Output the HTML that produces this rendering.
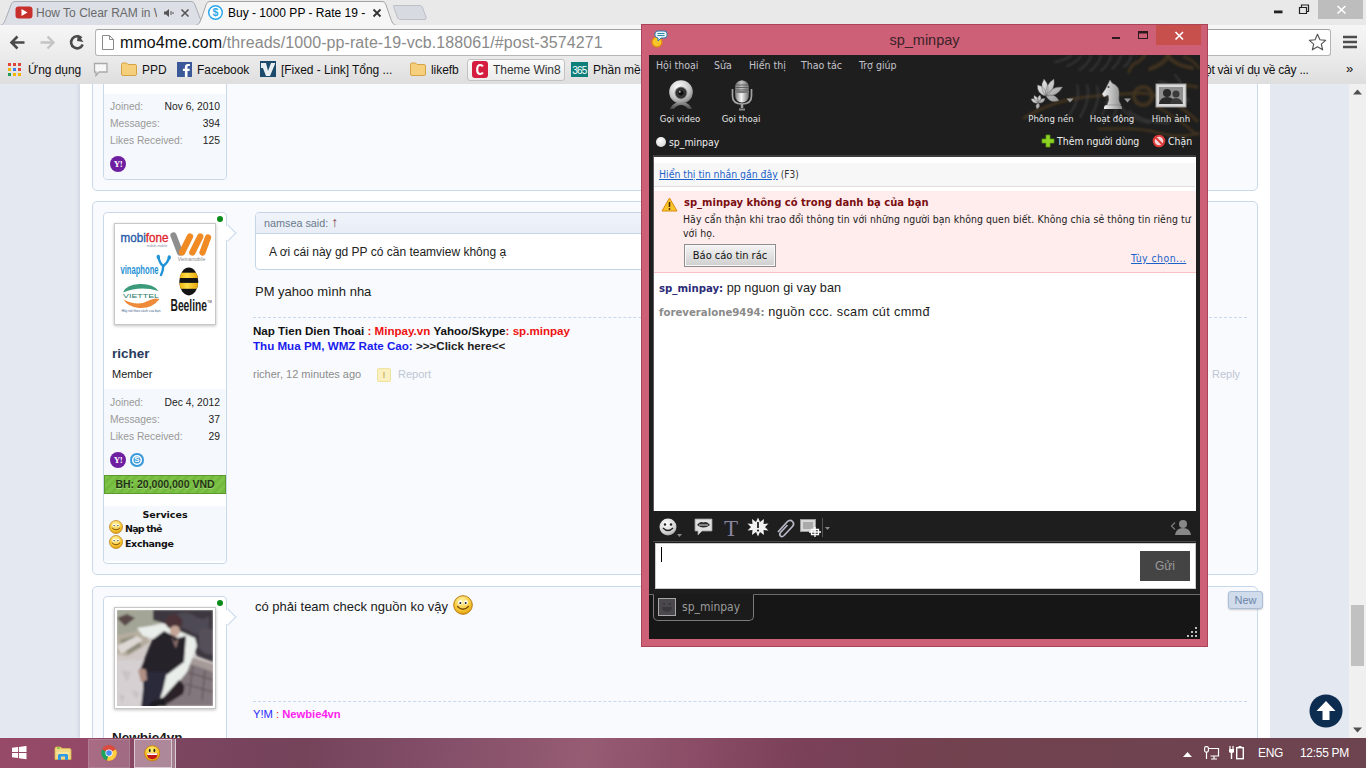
<!DOCTYPE html>
<html><head><meta charset="utf-8"><title>Buy - 1000 PP</title>
<style>
*{box-sizing:border-box;margin:0;padding:0}
html,body{width:1366px;height:768px;overflow:hidden;background:#fafbfd;font-family:"Liberation Sans",sans-serif;}
.abs{position:absolute}
#chrome{position:absolute;left:0;top:0;width:1366px;height:85px;background:#e9e9e9;font-family:"Liberation Sans",sans-serif;}
#toolbar{position:absolute;left:0;top:25px;width:1366px;height:60px;background:linear-gradient(#f6f6f6,#ececec 50%,#dedede);border-bottom:1px solid #a6a6a6}
#page{position:absolute;left:0;top:84px;width:1349px;height:654px;background:#e4e8f1;overflow:hidden}
#sheet{position:absolute;left:80px;top:0;width:1190px;height:654px;background:#fff;box-shadow:-2px 0 3px rgba(60,70,100,.10)}
#vscroll{position:absolute;left:1349px;top:84px;width:17px;height:654px;background:#f0f0f0}
#taskbar{position:absolute;left:0;top:738px;width:1366px;height:30px;background:linear-gradient(100deg,#964a68 0,#924866 7%,#7c4560 13%,#74435a 22%,#85506a 33%,#965c72 43%,#8a4c66 51%,#7a4058 59%,#72424f 70%,#6c4450 100%);color:#fff}
#ym{position:absolute;left:641px;top:24px;width:567px;height:623px;background:#cd5f77;box-shadow:0 0 0 1px rgba(150,50,70,.6) inset}
#ymc{position:absolute;left:8px;top:31px;width:551px;height:584px;background:#1e1e1e;overflow:hidden;font-family:"DejaVu Sans Condensed","DejaVu Sans",sans-serif}
.tabt{font-size:12px;line-height:16px;white-space:nowrap;overflow:hidden;letter-spacing:0}
.bmt{top:62px;font-size:12px;letter-spacing:-0.050px;line-height:16px;color:#111;white-space:nowrap}
.post{position:absolute;left:92px;width:1166px;border:1px solid #c9d9ec;border-radius:5px;background:#f9fafd}
.ubox{position:absolute;left:103px;width:124px;border:1px solid #c9d9ec;border-radius:4px;background:#fff;overflow:hidden}
.ustat{position:absolute;left:0;width:122px;background:#f5f8fc}
.st{position:absolute;left:110px;width:110px;font-size:10.300px;line-height:13px;margin-top:1px;color:#9a9a9a;white-space:nowrap}
.st b{position:absolute;right:0;top:0;font-weight:normal;color:#1d1d1d}
.yh{position:absolute;width:16px;height:16px;border-radius:8px;background:#6e1fa0;color:#fff;font:bold 9px/16px "Liberation Serif",serif;text-align:center;letter-spacing:-0.500px}
.sk{position:absolute;width:14px;height:14px;border-radius:7px;background:#3a9ad9;color:#fff;font:bold 8px/14px "Liberation Sans",sans-serif;text-align:center;box-shadow:inset 0 0 0 2px #3a9ad9, inset 0 0 0 3.500px #fff}
.bh{position:absolute;left:104px;width:122px;height:19px;border:1px solid #5c9a2e;background:repeating-linear-gradient(135deg,#7cc246 0 3px,#73b93d 3px 6px);color:#1f3510;font:bold 10.500px/17px "Liberation Sans",sans-serif;text-align:center;text-shadow:0 1px 0 rgba(255,255,255,.35)}
.svc{position:absolute;font:bold 9.500px/12px "DejaVu Sans",sans-serif;color:#111;white-space:nowrap}
.smi{position:absolute}
.arrow{position:absolute;left:226px;width:10px;height:16px}
.arrow:before{content:"";position:absolute;left:-4px;top:2px;width:11px;height:11px;border:1px solid #c9d9ec;border-left:none;border-bottom:none;background:#fff;transform:rotate(45deg)}
.dot{position:absolute;left:217px;width:6px;height:6px;border-radius:3px;background:#0a8a1a}
.av{position:absolute;left:114px;width:102px;height:102px;background:#fff;border:1px solid #c8c8c8;box-shadow:0 1px 3px rgba(0,0,0,.25)}
.photo{position:absolute;left:2px;top:2px;width:96px;height:96px}
.uname{position:absolute;left:112px;margin-top:1px;font:bold 13.500px/16px "Liberation Sans",sans-serif;color:#283a5c}
.utitle{position:absolute;left:112px;margin-top:1px;font:11px/13px "Liberation Sans",sans-serif;color:#222}
.quote{position:absolute;border:1px solid #c5d5e8;border-radius:4px;background:#fff;overflow:hidden}
.qh{height:21px;background:linear-gradient(#f0f4fa,#e8edf6);border-bottom:1px solid #c5d5e8;font:10.800px/21px "Liberation Sans",sans-serif;color:#6a7a8c;padding-left:8px}
.qb{font:12px/14px "Liberation Sans",sans-serif;color:#222;padding:11px 0 0 13px}
.msg{position:absolute;left:255px;margin-top:1px;font:13px/18px "Liberation Sans",sans-serif;color:#1a1a1a;white-space:nowrap}
.dash{position:absolute;left:253px;width:994px;height:0;border-top:1px dashed #c9d9ec}
.sig{position:absolute;left:253px;font:bold 11.600px/15px "Liberation Sans",sans-serif;white-space:nowrap}
.meta{position:absolute;font:11px/15px "Liberation Sans",sans-serif;color:#8c8c8c;white-space:nowrap}
.rep{position:absolute;width:14px;height:14px;border-radius:2px;background:#faf0c0;border:1px solid #efe2a0;color:#c9b36a;font:bold 9px/12px "Liberation Sans",sans-serif;text-align:center}
.newb{position:absolute;left:1228px;top:507px;width:35px;height:18px;border:1px solid #a9bdd8;border-radius:3px;background:#d0dcec;color:#6a84a8;font:11px/16px "Liberation Sans",sans-serif;text-align:center;box-shadow:0 1px 2px rgba(0,0,0,.2)}
.totop{position:absolute;left:1309px;top:610px;width:34px;height:34px}
.mn{position:absolute;top:3px;font:10.500px/14px "DejaVu Sans Condensed","DejaVu Sans",sans-serif;color:#c4c4cc;white-space:nowrap}
.tl{position:absolute;top:57px;text-align:center;font:9.500px/14px "DejaVu Sans Condensed","DejaVu Sans",sans-serif;color:#e6e6e6;white-space:nowrap}
.yt{font:10.400px/14px "DejaVu Sans Condensed","DejaVu Sans",sans-serif;white-space:nowrap}
.cm{left:5px;font:12.700px/16px "Liberation Sans",sans-serif;color:#1c1c1c;white-space:nowrap}
.yb{font:bold 11.300px/14px "DejaVu Sans Condensed","DejaVu Sans",sans-serif}
.tt{top:8px;font:12px/15px "Liberation Sans",sans-serif;color:#fff;white-space:nowrap;letter-spacing:-0.300px}
</style></head><body>
<div id="chrome">
<svg class="abs" style="left:0;top:0" width="1366" height="26" viewBox="0 0 1366 26">
  <path d="M-1 25.5 C3.500 25.5 4.500 22 6 18 L11 5 C12 2 13 1.5 16 1.5 L190 1.5 C193 1.5 194 2 195 5 L200 18 C201.5 22 202.5 25.5 207 25.5 Z" fill="#dcdfe6" stroke="#a9adb6" stroke-width="1"/>
  <path d="M394 5.5 L419 5.5 C421 5.5 422 6 422.700 8 L426 17 C426.500 19 426 19.500 424 19.500 L401 19.500 C399 19.500 398 19 397.300 17 L394 8 C393.500 6 393.500 5.500 394 5.500Z" fill="#d7dae1" stroke="#bcbfc6" stroke-width="1"/>
  <path d="M0 25.5 L194.500 25.500 C199 25.500 200 22 201.500 18 L206 5 C207 2 208 1.500 211 1.500 L381 1.500 C384 1.500 385 2 386 5 L390.500 18 C392 22 393 25.500 397.500 25.500 L1366 25.500 L1366 27 L0 27Z" fill="#f6f6f6" stroke="#a4a4a4" stroke-width="1"/>
</svg>
<div id="toolbar"></div>
<!-- tab 1 -->
<svg class="abs" style="left:15px;top:6px" width="18" height="14" viewBox="0 0 18 14"><rect x="0.500" y="0.500" width="17" height="12" rx="3" fill="#c8302d"/><path d="M6.500 3 L12.500 6.500 L6.500 10Z" fill="#fff"/></svg>
<div class="abs tabt" style="left:36px;top:5px;color:#6a6a6a;width:121px">How To Clear RAM in W</div>
<svg class="abs" style="left:163px;top:7px" width="12" height="12" viewBox="0 0 12 12"><path d="M1 4.500h2l3-2.500v8l-3-2.500h-2z" fill="#555"/><path d="M8 4v4M10 5v2" stroke="#555" stroke-width="1"/></svg>
<svg class="abs" style="left:180px;top:8px" width="10" height="10" viewBox="0 0 10 10"><path d="M1.500 1.500l7 7M8.500 1.500l-7 7" stroke="#555" stroke-width="1.600"/></svg>
<!-- tab 2 -->
<svg class="abs" style="left:207px;top:4px" width="17" height="17" viewBox="0 0 17 17"><circle cx="8.500" cy="8.500" r="6.800" fill="#fff" stroke="#29a7ec" stroke-width="1.500"/><text x="8.500" y="12.300" font-size="10.500" font-weight="bold" text-anchor="middle" fill="#29a7ec" font-family="Liberation Sans, sans-serif">$</text></svg>
<div class="abs tabt" style="left:228px;top:5px;color:#000;width:138px">Buy - 1000 PP - Rate 19 - V</div>
<svg class="abs" style="left:372px;top:8px" width="10" height="10" viewBox="0 0 10 10"><path d="M1.500 1.500l7 7M8.500 1.500l-7 7" stroke="#333" stroke-width="1.800"/></svg>
<!-- window buttons -->
<svg class="abs" style="left:1180px;top:0" width="186" height="22" viewBox="0 0 186 22"><rect x="138" y="0" width="45" height="19" fill="#bdbdbd"/><rect x="94" y="10.500" width="8.500" height="2.800" fill="#222"/><path d="M119.500 7.500h7v6h-7zM121.500 7.500v-2.500h7v6.500h-2" fill="none" stroke="#222" stroke-width="1.200"/><path d="M157.500 6l8 7.500M165.500 6l-8 7.500" stroke="#fff" stroke-width="1.600"/></svg>
<!-- nav -->
<svg class="abs" style="left:9px;top:33px" width="84" height="20" viewBox="0 0 84 20"><path d="M2.500 9.500h13M8.500 3.500l-6 6 6 6" fill="none" stroke="#4a4a4a" stroke-width="2.600"/><path d="M31.500 9.500h13M38.500 3.500l6 6-6 6" fill="none" stroke="#c4c4c4" stroke-width="2.400"/><path d="M72.500 5.200A6 6 0 1 0 73.700 11.500" fill="none" stroke="#4a4a4a" stroke-width="2.600"/><path d="M68.500 2v6.500h6.500z" fill="#4a4a4a" transform="rotate(8 72 5)"/></svg>
<div class="abs" style="left:95px;top:29px;width:1236px;height:27px;background:#fff;border:1px solid #b5b5b5;border-radius:3px;border-top-color:#a2a2a2"></div>
<svg class="abs" style="left:102px;top:35px" width="12" height="15" viewBox="0 0 12 15"><path d="M0.500 0.500h7l4 4v10h-11z" fill="#fff" stroke="#8a8a8a"/><path d="M7.500 0.500v4h4" fill="none" stroke="#8a8a8a"/></svg>
<div class="abs" id="url" style="left:120px;top:32px;font-size:16px;line-height:21px;color:#8a8a8a;white-space:nowrap;letter-spacing:0.085px"><span style="color:#111">mmo4me.com</span>/threads/1000-pp-rate-19-vcb.188061/#post-3574271</div>
<svg class="abs" style="left:1308px;top:33px" width="19" height="19" viewBox="0 0 21 21"><path d="M10.500 1.500l2.700 6 6.300 0.600-4.800 4.200 1.500 6.300-5.700-3.400-5.700 3.400 1.500-6.300-4.800-4.200 6.300-0.600z" fill="#fff" stroke="#555" stroke-width="1.300" stroke-linejoin="round"/></svg>
<svg class="abs" style="left:1343px;top:35px" width="14" height="14" viewBox="0 0 14 14"><path d="M0 2h14M0 7h14M0 12h14" stroke="#4d4d4d" stroke-width="2.600"/></svg>
<!-- bookmarks -->
<div id="bm">
<svg class="abs" style="left:8px;top:63px" width="14" height="14" viewBox="0 0 14 14"><g><rect x="0" y="0" width="3" height="3" fill="#e0453a"/><rect x="5" y="0" width="3" height="3" fill="#e0453a"/><rect x="10" y="0" width="3" height="3" fill="#e0453a"/><rect x="0" y="5" width="3" height="3" fill="#f4b400"/><rect x="5" y="5" width="3" height="3" fill="#3b7ded"/><rect x="10" y="5" width="3" height="3" fill="#e0453a"/><rect x="0" y="10" width="3" height="3" fill="#1c9c56"/><rect x="5" y="10" width="3" height="3" fill="#f4b400"/><rect x="10" y="10" width="3" height="3" fill="#f4b400"/></g></svg>
<div class="abs bmt" style="left:28px">Ứng dụng</div>
<svg class="abs" style="left:93px;top:62px" width="16" height="15" viewBox="0 0 16 15"><path d="M1.500 1.500h12.500v8.500h-8l-3 3.500v-3.500h-1.500z" fill="#f7f7f7" stroke="#a9a9a9" stroke-width="1.300"/></svg>
<svg class="abs fold" style="left:121px;top:62px" width="16" height="14" viewBox="0 0 16 14"><path d="M0.500 2.500 q0-1.500 1.500-1.500h3.500l1.500 1.500h7q1.500 0 1.500 1.500v8q0 1.500-1.500 1.500h-12q-1.500 0-1.500-1.500z" fill="#f6cf7c" stroke="#d6a343"/></svg>
<div class="abs bmt" style="left:142px">PPD</div>
<svg class="abs" style="left:177px;top:62px" width="15" height="15" viewBox="0 0 15 15"><rect width="15" height="15" fill="#3b5998"/><path d="M10.500 15v-6h2l0.300-2.300h-2.300v-1.500c0-0.700 0.300-1.100 1.100-1.100h1.300v-2.100c-0.300 0-1-0.100-1.900-0.100-1.900 0-3.100 1.100-3.100 3.200v1.600h-2v2.300h2v6z" fill="#fff"/></svg>
<div class="abs bmt" style="left:197px">Facebook</div>
<svg class="abs" style="left:260px;top:61px" width="16" height="16" viewBox="0 0 16 16"><rect width="16" height="16" fill="#1b4a6b"/><path d="M1 2h5l2 8 3-8h4v1l-5 12h-4z" fill="#e9eef2"/><path d="M1 2h5v5h-5z" fill="#e9eef2"/></svg>
<div class="abs bmt" style="left:281px">[Fixed - Link] Tổng ...</div>
<svg class="abs fold" style="left:410px;top:62px" width="16" height="14" viewBox="0 0 16 14"><path d="M0.500 2.500 q0-1.500 1.500-1.500h3.500l1.500 1.500h7q1.500 0 1.500 1.500v8q0 1.500-1.500 1.500h-12q-1.500 0-1.500-1.500z" fill="#f6cf7c" stroke="#d6a343"/></svg>
<div class="abs bmt" style="left:431px">likefb</div>
<div class="abs" style="left:467px;top:59px;width:98px;height:22px;border:1px solid #c2c2c2;border-radius:3px;background:linear-gradient(#fafafa,#ececec)"></div>
<svg class="abs" style="left:472px;top:61px" width="16" height="17" viewBox="0 0 16 17"><rect width="16" height="17" rx="3" fill="#d41d3f"/><path d="M10.800 5.500c-0.500-1-1.400-1.500-2.600-1.500-2 0-3 1.600-3 4.500s1 4.500 3 4.500c1.200 0 2.100-0.500 2.600-1.500" fill="none" stroke="#fff" stroke-width="2.200"/></svg>
<div class="abs bmt" style="left:493px;color:#333">Theme Win8</div>
<svg class="abs" style="left:571px;top:62px" width="17" height="15" viewBox="0 0 17 15"><rect width="17" height="15" fill="#0f7f7c"/><text x="8.500" y="11.500" font-size="10" fill="#fff" text-anchor="middle" font-family="Liberation Sans, sans-serif" letter-spacing="-0.8">365</text></svg>
<div class="abs bmt" style="left:593px">Phần mề</div>
<div class="abs bmt" style="left:1205px;letter-spacing:-0.250px">ột vài ví dụ về cây ...</div>
<div class="abs bmt" style="left:1346px;font-size:13px;top:61px">»</div>
</div>
</div>
<div id="page"><div id="sheet"></div>
<!-- post 1 (partial) -->
<div class="post" style="top:-20px;height:127px"></div>
<div class="ubox" style="top:-20px;height:116px"><div class="ustat" style="top:29px;height:86px"></div></div>
<div class="st" style="top:15px"><span>Joined:</span><b>Nov 6, 2010</b></div>
<div class="st" style="top:32px"><span>Messages:</span><b>394</b></div>
<div class="st" style="top:49px"><span>Likes Received:</span><b>125</b></div>
<div class="yh" style="left:110px;top:72px">Y!</div>
<!-- post 2 -->
<div class="post" style="top:117px;height:374px"></div>
<div class="ubox" style="top:128px;height:352px"><div class="ustat" style="top:176px;height:86px"></div><div class="ustat" style="top:293px;height:55px"></div></div>
<div class="arrow" style="top:141px"></div>
<div class="dot" style="top:132px"></div>
<div class="av" style="top:139px">
 <svg width="94" height="94" viewBox="0 0 94 94" style="position:absolute;left:3px;top:3px">
  <text x="2.500" y="15" font-size="13.500" fill="#2459a8" stroke="#2459a8" stroke-width=".35" font-family="Liberation Sans, sans-serif" textLength="48" lengthAdjust="spacingAndGlyphs">mobi<tspan fill="#e2242a" stroke="#e2242a">fone</tspan></text>
  <text x="39" y="19.500" font-size="3.300" fill="#8a8aa8" text-anchor="middle" font-family="Liberation Sans, sans-serif">mobile-mobile</text>
  <g fill="none" stroke-linecap="round" stroke-width="6.300" transform="translate(0 1.500)"><path d="M55.500 7 L62 24" stroke="#8e8e8e"/><path d="M64 24 L72 8M74.300 24 L82.300 8M84.500 24 L90 9" stroke="#f08a24"/></g>
  <text x="73.500" y="33.500" font-size="4.800" fill="#8a8a8a" text-anchor="middle" font-family="Liberation Sans, sans-serif">Vietnamobile</text>
  <text x="2.500" y="47.300" font-size="13" font-weight="bold" fill="#1f93d6" font-family="Liberation Sans, sans-serif" textLength="38" lengthAdjust="spacingAndGlyphs">vinaphone</text>
  <g stroke="#1f93d6" stroke-width="2.400" fill="none" stroke-linecap="round"><path d="M40.500 30.500 Q42 37 45.300 39 Q49.500 36 51 31"/><path d="M45.300 39 Q45 44 43 48"/></g><ellipse cx="40.300" cy="30" rx="1.700" ry="2.300" fill="#1f93d6"/><ellipse cx="51.200" cy="30.500" rx="1.700" ry="2.300" fill="#1f93d6"/>
  <path d="M5 65.500 Q8 57.500 21.500 57 T40.500 64 Q22 58.500 5 65.500z" fill="#3a9a7a"/><path d="M5.500 72.500 Q20 80 32 73 Q37 70.500 41.500 72 Q34 82 21 81 Q10 80 5.500 72.500z" fill="#ee8a3a"/>
  <text x="5" y="70.800" font-size="6" fill="#2a7a6a" font-family="Liberation Sans, sans-serif" textLength="36" lengthAdjust="spacingAndGlyphs">VIETTEL</text>
  <text x="23" y="84.500" font-size="3.300" fill="#3a5a8a" text-anchor="middle" font-family="Liberation Sans, sans-serif">Hãy nói theo cách của bạn</text>
  <defs><clipPath id="beec"><ellipse cx="70.800" cy="54.500" rx="9.500" ry="13.900"/></clipPath><linearGradient id="beeg" x1="0" x2="1"><stop offset="0" stop-color="#e8a800"/><stop offset=".4" stop-color="#ffe04a"/><stop offset="1" stop-color="#e09a00"/></linearGradient></defs>
  <ellipse cx="70.800" cy="54.500" rx="9.500" ry="13.900" fill="#141414"/><g clip-path="url(#beec)"><rect x="60" y="45.700" width="22" height="5.300" fill="url(#beeg)"/><rect x="60" y="55.900" width="22" height="5.900" fill="url(#beeg)"/></g>
  <text x="52.500" y="84.400" font-size="16" font-weight="bold" fill="#1a1a1a" font-family="Liberation Sans, sans-serif" textLength="36.500" lengthAdjust="spacingAndGlyphs">Beeline</text>
  <text x="89.300" y="76" font-size="3" fill="#1a1a1a" font-family="Liberation Sans, sans-serif">TM</text>
 </svg>
</div>
<div class="uname" style="top:261px">richer</div>
<div class="utitle" style="top:283px">Member</div>
<div class="st" style="top:311px"><span>Joined:</span><b>Dec 4, 2012</b></div>
<div class="st" style="top:328px"><span>Messages:</span><b>37</b></div>
<div class="st" style="top:345px"><span>Likes Received:</span><b>29</b></div>
<div class="yh" style="left:110px;top:368px">Y!</div>
<div class="sk" style="left:130px;top:369px">S</div>
<div class="bh" style="top:391px">BH: 20,000,000 VND</div>
<div class="svc" style="top:425px;left:104px;width:122px;text-align:center">Services</div>
<div class="smi" style="left:109px;top:436px"><svg width="14" height="14" viewBox="0 0 20 20" style="display:block"><defs><radialGradient id="sm14" cx=".45" cy=".3" r=".75"><stop offset="0" stop-color="#fff6b0"/><stop offset=".65" stop-color="#f6c62e"/><stop offset="1" stop-color="#d8940e"/></radialGradient></defs><circle cx="10" cy="10" r="9.300" fill="url(#sm14)" stroke="#b87a14" stroke-width="1"/><ellipse cx="7" cy="7.500" rx="1.900" ry="2.300" fill="#fff"/><ellipse cx="13" cy="7.500" rx="1.900" ry="2.300" fill="#fff"/><circle cx="7.300" cy="8" r="1" fill="#222"/><circle cx="12.700" cy="8" r="1" fill="#222"/><path d="M4.500 11.500q5.500 5.500 11 0" fill="none" stroke="#7a4a0a" stroke-width="1.300" stroke-linecap="round"/></svg></div><div class="svc" style="top:439px;left:125px;letter-spacing:-0.800px">Nạp thẻ</div>
<div class="smi" style="left:109px;top:451px"><svg width="14" height="14" viewBox="0 0 20 20" style="display:block"><defs><radialGradient id="sm14b" cx=".45" cy=".3" r=".75"><stop offset="0" stop-color="#fff6b0"/><stop offset=".65" stop-color="#f6c62e"/><stop offset="1" stop-color="#d8940e"/></radialGradient></defs><circle cx="10" cy="10" r="9.300" fill="url(#sm14b)" stroke="#b87a14" stroke-width="1"/><ellipse cx="7" cy="7.500" rx="1.900" ry="2.300" fill="#fff"/><ellipse cx="13" cy="7.500" rx="1.900" ry="2.300" fill="#fff"/><circle cx="7.300" cy="8" r="1" fill="#222"/><circle cx="12.700" cy="8" r="1" fill="#222"/><path d="M4.500 11.500q5.500 5.500 11 0" fill="none" stroke="#7a4a0a" stroke-width="1.300" stroke-linecap="round"/></svg></div><div class="svc" style="top:454px;left:125px;letter-spacing:-0.370px">Exchange</div>
<div class="quote" style="left:255px;top:128px;width:700px;height:58px"><div class="qh">namsea said: <span style="color:#7a4048;font-size:14px;line-height:14px">↑</span></div><div class="qb">A ơi cái này gd PP có cần teamview không ạ</div></div>
<div class="msg" style="top:198px">PM yahoo mình nha</div>
<div class="dash" style="top:233px"></div>
<div class="sig" style="top:239px"><span style="color:#111">Nap Tien Dien Thoai </span><span style="color:#ee1111">: </span><span style="color:#ee1111">Minpay.vn</span><span style="color:#111"> Yahoo/Skype</span><span style="color:#ee1111">: sp.minpay</span></div>
<div class="sig" style="top:254px"><span style="color:#1a1aee">Thu Mua PM, WMZ Rate Cao:</span><span style="color:#222"> &gt;&gt;&gt;Click here&lt;&lt;</span></div>
<div class="meta" style="top:283px;left:253px">richer, 12 minutes ago</div>
<div class="rep" style="left:377px;top:284px">!</div>
<div class="meta" style="top:283px;left:398px;color:#bcc6d4">Report</div>
<div class="meta" style="top:283px;left:1212px;color:#bcc6d4">Reply</div>
<!-- post 3 -->
<div class="post" style="top:502px;height:200px"></div>
<div class="ubox" style="top:512px;height:200px"></div>
<div class="arrow" style="top:525px"></div>
<div class="dot" style="top:516px"></div>
<div class="av" style="top:523px"><svg class="photo" width="96" height="96" viewBox="0 0 96 96"><defs><filter id="pb" x="-5%" y="-5%" width="110%" height="110%"><feGaussianBlur stdDeviation="1.300"/></filter><clipPath id="pc"><rect width="96" height="96"/></clipPath></defs><g clip-path="url(#pc)"><rect width="96" height="96" fill="#cfc8c6"/><g filter="url(#pb)">
<path d="M0 0h45v12l-20 8-25 6z" fill="#a3a596"/><path d="M0 8l10-4 8 4-10 8z" fill="#5a4a48"/>
<path d="M0 26l25-6 8 12-22 14-11-2z" fill="#b5ad9f"/><path d="M3 30l14-4 8 10-14 8z" fill="#8d8a7c"/>
<path d="M36 0h60v52l-16-6-8-16-16-14-20-6z" fill="#3d3840"/><path d="M60 4q10-4 18 2t14 0v16q-10 6-18 0t-14-4z" fill="#4e4a54"/><path d="M82 20q8-4 14 0v24q-8 2-14-6z" fill="#55505a"/>
<path d="M68 48l28 8v40h-52l14-26z" fill="#82777c"/><path d="M70 62l26 8M68 74l28 8M76 56l-4 30M88 60l-3 30" stroke="#5e5458" stroke-width="1.200" fill="none"/><path d="M70 46l26 8v8l-28-10z" fill="#a59a98"/>
<path d="M20 18l26-4 32 14 2 8-10 26-20 24-12 2-2-12 18-20 6-22-34-8z" fill="#e9eeea"/><path d="M0 36l20-10 6 4-22 14z" fill="#ddd8d4"/>
<path d="M62 70q8 4 4 14l-16 10-6-4z" fill="#2a2228"/>
<path d="M0 50h30l10 46h-40z" fill="#d6d0d2"/><path d="M4 60l10 2-4 10zM14 80l8 2-2 8zM2 84l6 2-3 8z" fill="#c9c2c5"/>
<ellipse cx="57" cy="12" rx="8.500" ry="7.500" fill="#4b3337"/><ellipse cx="58" cy="21" rx="5" ry="5.500" fill="#c4a496"/>
<path d="M47 21l8 4 6 3 8-2 -2 26-16 12-16 6-8-2-4-8 12-30z" fill="#27212b"/><path d="M54 26l4 6 4-5-3 12z" fill="#8a6e6a"/>
<path d="M26 62l24 0-4 18-6 18h-16l2-18z" fill="#2c2b3a"/><path d="M21 60q4-3 8 0l1 10-6 2z" fill="#b08f84"/>
<path d="M34 92l12-4 4 8h-18z" fill="#1e1a20"/>
</g></g></svg></div>
<div class="uname" style="top:645px;color:#1a1a1a">Newbie4vn</div>
<div class="msg" style="top:513px">có phải team check nguồn ko vậy</div>
<div class="smi big" style="left:453px;top:511px"><svg width="20" height="20" viewBox="0 0 20 20" style="display:block"><defs><radialGradient id="sm20" cx=".45" cy=".3" r=".75"><stop offset="0" stop-color="#fff6b0"/><stop offset=".65" stop-color="#f6c62e"/><stop offset="1" stop-color="#d8940e"/></radialGradient></defs><circle cx="10" cy="10" r="9.300" fill="url(#sm20)" stroke="#b87a14" stroke-width="1"/><ellipse cx="7" cy="7.500" rx="1.900" ry="2.300" fill="#fff"/><ellipse cx="13" cy="7.500" rx="1.900" ry="2.300" fill="#fff"/><circle cx="7.300" cy="8" r="1" fill="#222"/><circle cx="12.700" cy="8" r="1" fill="#222"/><path d="M4.500 11.500q5.500 5.500 11 0" fill="none" stroke="#7a4a0a" stroke-width="1.300" stroke-linecap="round"/></svg></div>
<div class="dash" style="top:617px"></div>
<div class="sig" style="top:623px;font-weight:normal;font-size:11.200px"><span style="color:#2a2aff">Y!M</span><span style="color:#ee1111"> : </span><b style="color:#ff22ee">Newbie4vn</b></div>
<div class="newb">New</div>
<div class="totop"><svg width="34" height="34" viewBox="0 0 34 34"><circle cx="17" cy="17" r="16.500" fill="#0c2c50"/><path d="M17 7 L7.500 17 h6 v9 h7 v-9 h6z" fill="#fff"/></svg></div>
</div>
<div id="vscroll"><svg class="abs" style="left:4px;top:5px" width="9" height="6" viewBox="0 0 9 6"><path d="M0 5.500l4.500-5 4.500 5z" fill="#505050"/></svg><div class="abs" style="left:2px;top:521px;width:13px;height:61px;background:#c1c1c1"></div><svg class="abs" style="left:4px;top:643px" width="9" height="6" viewBox="0 0 9 6"><path d="M0 0.500l4.500 5 4.500-5z" fill="#505050"/></svg></div>
<div id="ym">
<svg class="abs" style="left:9px;top:6px" width="20" height="18" viewBox="0 0 20 18"><circle cx="7" cy="12" r="5" fill="#f7c52a" stroke="#e08a10" stroke-width="1.200"/><path d="M5 3.500q0-2.500 3-2.500h6q3 0 3 2.500v2q0 2.500-3 2.500h-3l-3 3v-3q-3-0.500-3-2.500z" fill="#e8f4fa" stroke="#2a7aa8" stroke-width="1"/><path d="M7.500 3.500h7M7.500 5.500h7" stroke="#1a7a9a" stroke-width="0.900"/></svg>
<div class="abs" style="left:0;top:6px;width:567px;text-align:center;font:14.500px/20px 'Liberation Sans',sans-serif;color:#3a2228">sp_minpay</div>
<svg class="abs" style="left:465px;top:0" width="100" height="24" viewBox="0 0 100 24"><rect x="50" y="1" width="45" height="20" fill="#c7504c"/><rect x="6" y="13" width="8" height="2" fill="#2a1a1e"/><rect x="32.500" y="7.500" width="9" height="7" fill="none" stroke="#2a1a1e" stroke-width="1"/><rect x="32" y="7" width="10" height="2.500" fill="#2a1a1e"/><path d="M69.500 8l7.500 7.500M77 8l-7.500 7.500" stroke="#fff" stroke-width="1.700"/></svg>
<div id="ymc">
 <svg class="abs" style="left:330px;top:0" width="221" height="100" viewBox="0 0 221 100"><defs><filter id="bl"><feGaussianBlur stdDeviation="1"/></filter></defs><g fill="none" stroke-linecap="round" filter="url(#bl)">
<g stroke="#5c4220" opacity=".55"><path d="M45 63 q30-18 62-21 t55-4 q30 2 56 28" stroke-width="3"/><path d="M189 0 q-2 8-18 14" stroke-width="4"/><path d="M189 0 q4 9 24 13" stroke-width="4"/><path d="M166 0 q-4 6-9 8 t-7 9" stroke-width="3"/><path d="M205 2 q8 2 15 11" stroke-width="2.500"/><circle cx="164" cy="41" r="9" stroke-width="4"/><path d="M120 74 q40-2 60 4 t40 0" stroke-width="2.500"/><path d="M190 36 q10 -8 28 -4" stroke-width="3"/><path d="M178 52 q20 10 40 28" stroke-width="2.500"/></g>
<g stroke="#484848" opacity=".6" stroke-width="1.800"><path d="M112 1 q-2 8-12 14"/><path d="M122 1 q-2 8-11 15"/><path d="M132 1 q-2 8-10 15"/><path d="M142 1 q-2 7-9 13"/><path d="M152 1 q-1 6-7 11"/><path d="M102 1 q-4 6-14 10"/><path d="M92 1 q-6 4-16 6"/>
<path d="M98 30 q4 14-8 30"/><path d="M108 30 q4 14-7 32"/><path d="M118 31 q4 14-6 30"/><path d="M128 34 q3 12-5 26"/><path d="M138 40 q2 10-4 22"/><path d="M140 50 q10 14 30 18"/><path d="M150 56 q14 12 40 12"/><path d="M180 26 q16 4 30 20"/><path d="M196 20 q10 10 10 30"/></g>
</g></svg>
 <div class="mn" style="left:7px">Hội thoại</div><div class="mn" style="left:65px">Sửa</div><div class="mn" style="left:100px">Hiển thị</div><div class="mn" style="left:152px">Thao tác</div><div class="mn" style="left:210px">Trợ giúp</div>
 <!-- webcam -->
 <svg class="abs" style="left:17px;top:24px" width="30" height="34" viewBox="0 0 30 34"><defs><radialGradient id="wg" cx=".4" cy=".3" r=".8"><stop offset="0" stop-color="#fff"/><stop offset=".6" stop-color="#c4c4c4"/><stop offset="1" stop-color="#6e6e6e"/></radialGradient><linearGradient id="wb2" x1="0" y1="0" x2="0" y2="1"><stop offset="0" stop-color="#9a9a9a"/><stop offset="1" stop-color="#444"/></linearGradient></defs><path d="M4 30q2-5 8-7l3 1 3-1q6 2 8 7l-4 0q-3-4-7-4t-7 4z" fill="url(#wb2)"/><circle cx="15" cy="13" r="11.800" fill="url(#wg)"/><circle cx="15" cy="14" r="6.400" fill="#8a8a8a"/><circle cx="15" cy="14" r="5.400" fill="#2e2e2e"/><circle cx="15" cy="14" r="3.200" fill="#0c0c0c" stroke="#555" stroke-width=".6"/><circle cx="13.800" cy="12.800" r="1" fill="#aaa"/></svg>
 <div class="tl" style="left:-9px;width:80px">Gọi video</div>
 <!-- mic -->
 <svg class="abs" style="left:81px;top:25px" width="24" height="32" viewBox="0 0 24 32"><defs><linearGradient id="mg" x1="0" x2="1"><stop offset="0" stop-color="#7a7a7a"/><stop offset=".45" stop-color="#f6f6f6"/><stop offset="1" stop-color="#707070"/></linearGradient></defs><path d="M2.500 9v7q0 8 9.500 8t9.500-8v-7" fill="none" stroke="#a2a2a2" stroke-width="1.700"/><rect x="5.200" y="0.500" width="13.600" height="22" rx="6.500" fill="url(#mg)"/><path d="M5.500 5h13M5.500 7.500h13M5.500 10h13" stroke="#555" stroke-width=".9"/><path d="M8 1.500v9.500M10 1v10M12 1v10M14 1v10M16 1.500v9.500" stroke="#666" stroke-width=".7"/><rect x="5.200" y="11" width="13.600" height="2" fill="#7a7a7a"/><path d="M12 24v4" stroke="#a2a2a2" stroke-width="2.500"/><path d="M9 29.500h6" stroke="#888" stroke-width="2"/></svg>
 <div class="tl" style="left:52px;width:80px">Gọi thoại</div>
 <!-- right icons -->
 <svg class="abs" style="left:381px;top:23px" width="46" height="34" viewBox="0 0 46 34"><defs><linearGradient id="lg" x1="0" y1="0" x2="1" y2="1"><stop offset="0" stop-color="#f2f2f2"/><stop offset="1" stop-color="#8e8e8e"/></linearGradient></defs><g fill="url(#lg)" stroke="#6a6a6a" stroke-width=".5"><path d="M16.0 18.0Q16.7 8.7 7.5 7.0Q6.8 16.3 16.0 18.0z M16.0 18.0Q21.2 8.8 14.0 1.0Q8.8 10.2 16.0 18.0z M16.0 18.0Q25.6 12.1 24.0 1.0Q14.4 6.9 16.0 18.0z M16.0 18.0Q27.2 18.9 32.5 9.0Q21.3 8.1 16.0 18.0z M16.0 18.0Q20.5 26.1 29.0 22.5Q24.5 14.4 16.0 18.0z"/><path d="M8.5 25.0Q6.4 19.8 1.0 21.0Q3.1 26.2 8.5 25.0z M8.5 25.0Q9.3 19.4 4.0 17.5Q3.2 23.1 8.5 25.0z M8.5 25.0Q12.8 21.7 10.0 17.0Q5.7 20.3 8.5 25.0z M8.5 25.0Q13.8 25.7 15.0 20.5Q9.7 19.8 8.5 25.0z M8.5 25.0Q4.3 27.1 7.0 31.0Q11.2 28.9 8.5 25.0z"/></g><path d="M36.500 20.500h7l-3.500 4z" fill="#9a9a9a"/></svg>
 <div class="tl" style="left:362px;width:80px">Phông nền</div>
 <svg class="abs" style="left:447px;top:22px" width="40" height="36" viewBox="0 0 40 36"><defs><linearGradient id="kg" x1="0" x2="1"><stop offset="0" stop-color="#f2f2f2"/><stop offset="1" stop-color="#8e8e8e"/></linearGradient></defs><path d="M8 31q0-3 3-3h12q3 0 3 3v1h-18z" fill="url(#kg)"/><path d="M11 28q3-6 1-10l-4 2-2-3q4-5 6-10l2-4 2 3q8 3 7 12-1 6 2 10z" fill="url(#kg)" stroke="#777" stroke-width=".5"/><circle cx="12.500" cy="10" r="1" fill="#444"/><path d="M28 21.500h7l-3.500 4z" fill="#9a9a9a"/></svg>
 <div class="tl" style="left:423px;width:80px">Hoạt động</div>
 <svg class="abs" style="left:506px;top:28px" width="32" height="26" viewBox="0 0 32 26"><rect x="1" y="1" width="30" height="23" fill="#d9d9d9" stroke="#9a9a9a"/><rect x="4" y="4" width="24" height="17" fill="#8e8e8e"/><circle cx="12" cy="10" r="4" fill="#2a2a2a"/><path d="M4 21q1-7 8-7t8 7z" fill="#2a2a2a"/><circle cx="21" cy="11" r="3.500" fill="#3a3a3a"/><path d="M15 21q1-6 6-6t7 6z" fill="#3a3a3a"/></svg>
 <div class="tl" style="left:482px;width:80px">Hình ảnh</div>
 <!-- status row -->
 <div class="abs" style="left:7px;top:82px;width:10px;height:10px;border-radius:5px;background:radial-gradient(circle at 40% 35%,#fff,#ddd 70%,#aaa)"></div>
 <div class="abs yt" style="left:20px;top:80px;color:#eee">sp_minpay</div>
 <svg class="abs" style="left:392px;top:79px" width="14" height="14" viewBox="0 0 14 14"><path d="M5 1h4v4h4v4h-4v4h-4v-4h-4v-4h4z" fill="#8fd324" stroke="#5a9a10" stroke-width=".8"/></svg>
 <div class="abs yt" style="left:408px;top:79px;color:#eee">Thêm người dùng</div>
 <svg class="abs" style="left:503px;top:79px" width="14" height="14" viewBox="0 0 14 14"><circle cx="7" cy="7" r="5.300" fill="#f4d6d6" stroke="#e03a3a" stroke-width="2"/><path d="M3.300 3.300l7.400 7.400" stroke="#e03a3a" stroke-width="2"/></svg>
 <div class="abs yt" style="left:519px;top:79px;color:#eee">Chặn</div>
 <!-- chat -->
 <div class="abs" style="left:4px;top:100px;width:543px;height:356px;background:#fff;border-top:2px solid #3c3c3c;border-left:1px solid #5a5a5a">
   <div class="abs" style="left:0;top:6px;width:541px;height:24px;background:#f7f7f7;border-bottom:1px solid #dedede"></div>
   <div class="abs yt" style="left:5px;top:10px;color:#333"><span style="color:#1a62c8;text-decoration:underline">Hiển thị tin nhắn gần đây</span> <span style="font-size:10px">(F3)</span></div>
   <div class="abs" style="left:0;top:34px;width:542px;height:82px;background:#ffecec;border-bottom:1px solid #f6c0c4"></div>
   <svg class="abs" style="left:7px;top:40px" width="17" height="15" viewBox="0 0 17 15"><path d="M8.500 1l7.500 13h-15z" fill="#fbc52a" stroke="#d98a10" stroke-width="1" stroke-linejoin="round"/><path d="M8.500 5v5" stroke="#4a2a00" stroke-width="1.600"/><circle cx="8.500" cy="12" r="0.900" fill="#4a2a00"/></svg>
   <div class="abs yt" id="wt" style="left:30px;top:39px;color:#7a0f12;font-weight:bold;font-size:11.100px">sp_minpay không có trong danh bạ của bạn</div>
   <div class="abs yt" id="wb" style="left:29px;top:55px;color:#1a1a1a;line-height:14px;letter-spacing:0.090px">Hãy cẩn thận khi trao đổi thông tin với những người bạn không quen biết. Không chia sẻ thông tin riêng tư<br>với họ.</div>
   <div class="abs" style="left:30px;top:87px;width:92px;height:23px;border:1px solid #8e8e8e;background:linear-gradient(#f4f4f4,#dedede 60%,#cfcfcf);box-shadow:inset 0 0 0 1px #f8f8f8;font:11px/21px 'DejaVu Sans Condensed','DejaVu Sans',sans-serif;text-align:center;color:#111">Báo cáo tin rác</div>
   <div class="abs yt" id="tc" style="left:477px;top:94px;color:#1a62c8;text-decoration:underline;letter-spacing:0.450px">Tùy chọn...</div>
   <div class="abs cm" style="top:123px"><b class="yb" style="color:#2b2b78">sp_minpay:</b> <span>pp nguon gi vay ban</span></div>
   <div class="abs cm" style="top:147px"><b class="yb" style="color:#8a8a8a">foreveralone9494:</b> <span style="letter-spacing:0.330px">nguồn ccc. scam cút cmmđ</span></div>
 </div>
 <!-- format toolbar -->
 <svg class="abs" style="left:8px;top:461px" width="180" height="24" viewBox="0 0 180 24">
   <defs><radialGradient id="sg" cx=".4" cy=".3" r=".8"><stop offset="0" stop-color="#fff"/><stop offset=".7" stop-color="#cfcfcf"/><stop offset="1" stop-color="#8a8a8a"/></radialGradient></defs>
   <circle cx="11" cy="11" r="8.500" fill="url(#sg)"/><circle cx="8" cy="8.500" r="1.200" fill="#222"/><circle cx="14" cy="8.500" r="1.200" fill="#222"/><path d="M6 12q5 5 10 0" fill="none" stroke="#222" stroke-width="1.400"/><path d="M20 18h5l-2.500 3z" fill="#888"/>
   <path d="M38 3h17v12h-10l-4 4v-4h-3z" fill="#e0e0e0" stroke="#9a9a9a" stroke-width=".8"/><path d="M40 9q3-4 6.500-2.500 3.500-1.500 6.500 2.500-6.500 5-13 0z" fill="#2a2a2a"/><path d="M42 9h9" stroke="#ddd" stroke-width="1"/>
   <text x="74" y="20" font-size="23" font-family="Liberation Serif, serif" fill="#8a84a0" text-anchor="middle">T</text>
   <path d="M101 1.500l2 4.500 4-3-0.500 5 5-0.500-3.500 3.500 3.500 3.500-5-0.500 0.500 5-4-3-2 4.500-2-4.500-4 3 0.500-5-5 0.500 3.500-3.500-3.500-3.500 5 0.500-0.500-5 4 3z" fill="#f2f2f2"/><path d="M101 6v6" stroke="#222" stroke-width="1.800"/><circle cx="101" cy="14.500" r="1.100" fill="#222"/>
   <path d="M121 16l9-10q3-3 5.500-0.500t-0.500 5.500l-8 8.500q-2 2-3.500 0.500t0-3.500l7-7.500" fill="none" stroke="#b9b9c9" stroke-width="1.700"/>
   <g transform="translate(-3 0)"><rect x="146.500" y="3.500" width="15" height="12" fill="#d8d8d8" stroke="#9a9a9a"/><rect x="149" y="6" width="10" height="7" fill="#aaa"/><path d="M157.500 13.500h7v5h-7zM161 11v10M155 16h12" fill="none" stroke="#fff" stroke-width="1.300"/><path d="M168.500 2v19" stroke="#555" stroke-width="1"/><path d="M171 11h5l-2.500 3z" fill="#888"/></g>
 </svg>
 <svg class="abs" style="left:521px;top:463px" width="22" height="18" viewBox="0 0 22 18"><path d="M5 4.500l-3.500 3.500 3.500 3.500" fill="none" stroke="#777" stroke-width="1.300"/><circle cx="13" cy="6" r="4" fill="#888"/><path d="M5 17q1-7 8-7t8 7z" fill="#888"/></svg>
 <div class="abs" style="left:4px;top:486px;width:543px;height:1px;background:#4a4a4a"></div>
 <div class="abs" style="left:6px;top:488px;width:541px;height:46px;background:#fff;border:1px solid #ccc"></div>
 <div class="abs" style="left:12px;top:492px;width:1px;height:15px;background:#000"></div>
 <div class="abs" style="left:491px;top:496px;width:50px;height:30px;background:#444;color:#9a9a9a;font:12px/30px 'Liberation Sans',sans-serif;text-align:center">Gửi</div>
 <div class="abs" style="left:0;top:539px;width:551px;height:45px;background:#161616;border-top:1px solid #6c6c6c"></div>
 <div class="abs" style="left:4px;top:539px;width:101px;height:27px;background:#1b1b1b;border:1px solid #7a7a7a;border-top:1px solid #1b1b1b;border-radius:0 0 5px 5px"></div>
 <div class="abs" style="left:9px;top:543px;width:18px;height:18px;background:#4a484c;border:1px solid #a8a8a8"><div style="position:absolute;left:3px;top:8px;width:10px;height:5px;border-radius:0 0 5px 5px;background:#3a383c"></div><div style="position:absolute;left:4px;top:4px;width:2px;height:2px;background:#3a383c;box-shadow:6px 0 0 #3a383c"></div></div>
 <div class="abs" style="left:33px;top:544px;font:12px/16px 'DejaVu Sans Condensed','DejaVu Sans',sans-serif;color:#9a9a9a">sp_minpay</div>
 <svg class="abs" style="left:536px;top:570px" width="13" height="13" viewBox="0 0 13 13"><g fill="#bbb"><rect x="10" y="10" width="2" height="2"/><rect x="6" y="10" width="2" height="2"/><rect x="2" y="10" width="2" height="2"/><rect x="10" y="6" width="2" height="2"/><rect x="6" y="6" width="2" height="2"/><rect x="10" y="2" width="2" height="2"/></g></svg>
</div>
</div>
<div id="taskbar">
<svg class="abs" style="left:12px;top:8px" width="14.500" height="13.500" viewBox="0 0 15 15" preserveAspectRatio="none"><path d="M0 2l6.200-0.900v5.700h-6.200zM7.100 1l7.900-1.100v6.900h-7.900zM0 7.700h6.200v5.700l-6.200-0.900zM7.100 7.700h7.900v6.900l-7.900-1.100z" fill="#fff"/></svg>
<svg class="abs" style="left:54px;top:8px" width="18" height="15" viewBox="0 0 18 15"><path d="M1 2.500q0-1.500 1.500-1.500h4l1.500 1.500h7.500q1.500 0 1.500 1.500v9.500h-16z" fill="#f3d983" stroke="#d9b64e" stroke-width=".8"/><rect x="3" y="1.500" width="3" height="1.200" fill="#58c432"/><path d="M4 14v-4.500q0-1.500 1.500-1.500h7q1.500 0 1.500 1.500v4.500h-3v-3.500h-4v3.500z" fill="#2e9be6"/><path d="M2.500 7h13" stroke="#fbeeb6" stroke-width="1"/></svg>
<div class="abs" style="left:88px;top:1px;width:42px;height:29px;background:rgba(255,255,255,.2);box-shadow:inset 0 0 0 1px rgba(255,255,255,.12)"></div>
<svg class="abs" style="left:101px;top:7px" width="16" height="16" viewBox="0 0 16 16"><circle cx="8" cy="8" r="7.700" fill="#dd4b3e"/><path d="M8 8L1.300 4.200A7.700 7.700 0 0 0 6 15.450z" fill="#1da260"/><path d="M8 8L6 15.450A7.700 7.700 0 0 0 14.700 4.200z" fill="#fdcf3f"/><path d="M8 8L14.700 4.200A7.700 7.700 0 0 0 1.300 4.200z" fill="#dd4b3e"/><circle cx="8" cy="8" r="3.600" fill="#fff"/><circle cx="8" cy="8" r="2.800" fill="#4a8af4"/></svg>
<div class="abs" style="left:134px;top:1px;width:38px;height:29px;background:rgba(255,255,255,.36);box-shadow:inset 0 0 0 1px rgba(255,255,255,.55)"></div>
<div class="abs" style="left:172px;top:1px;width:4px;height:29px;background:rgba(255,255,255,.3);border-right:1px solid rgba(255,255,255,.6)"></div>
<svg class="abs" style="left:143.500px;top:7px" width="16.500" height="16.500" viewBox="0 0 18 18"><defs><radialGradient id="yg" cx=".45" cy=".3" r=".8"><stop offset="0" stop-color="#fff27a"/><stop offset=".6" stop-color="#f7c21c"/><stop offset="1" stop-color="#d88608"/></radialGradient></defs><circle cx="9" cy="9" r="8.300" fill="url(#yg)" stroke="#c47806" stroke-width=".8"/><ellipse cx="6.300" cy="6" rx="1" ry="1.800" fill="#222"/><ellipse cx="11.300" cy="6" rx="1" ry="1.800" fill="#222"/><path d="M3 9h12q-0.500 6.500-6 6.500t-6-6.500z" fill="#c01818"/><path d="M3.300 9h11.400l-0.300 2h-10.800z" fill="#fff"/></svg>
<svg class="abs" style="left:1183px;top:14px" width="9" height="5" viewBox="0 0 9 5"><path d="M0 5l4.500-5 4.500 5z" fill="#fff"/></svg>
<svg class="abs" style="left:1204px;top:8px" width="16" height="14" viewBox="0 0 16 14"><path d="M4.500 2.500h10v7.500h-8" fill="none" stroke="#fff" stroke-width="1.200"/><path d="M10 10v3M7 13h6" stroke="#fff" stroke-width="1.200"/><rect x="0.600" y="0.600" width="3.800" height="5.500" rx="1.500" fill="#6d4351" stroke="#fff" stroke-width="1.200"/><path d="M2.500 6v7" stroke="#fff" stroke-width="1.200"/></svg>
<svg class="abs" style="left:1228px;top:7px" width="17" height="15" viewBox="0 0 17 15"><path d="M2 1v3M5 1v3" stroke="#fff" stroke-width="1.200"/><path d="M1 4h5v2.500q0 1.500-2.500 1.500t-2.500-1.500z" fill="#fff"/><path d="M3.500 8v6" stroke="#fff" stroke-width="1.400"/><rect x="8.700" y="2.700" width="6.600" height="11" fill="none" stroke="#fff" stroke-width="1.400"/><rect x="10.500" y="1" width="3" height="2" fill="#fff"/><rect x="10" y="4" width="4" height="8.500" fill="#fff" opacity=".0"/></svg>
<div class="abs tt" style="left:1258px">ENG</div>
<div class="abs tt" style="left:1300px">12:55 PM</div>
</div>
</body></html>
